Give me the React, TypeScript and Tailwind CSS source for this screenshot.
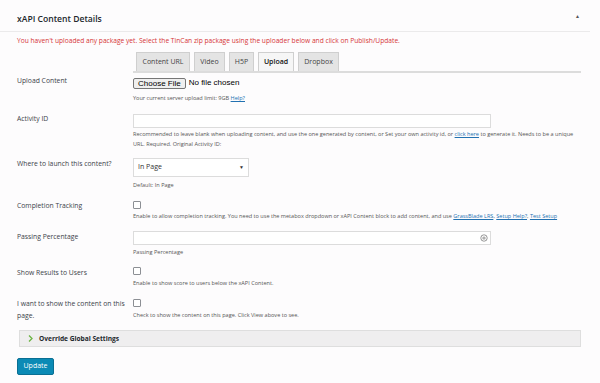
import React from 'react';

const tabs = [
  { name: 'Content URL', w: 'w-[54px]' },
  { name: 'Video', w: 'w-[31px]' },
  { name: 'H5P', w: 'w-[25px]' },
  { name: 'Upload', w: 'w-[36px]' },
  { name: 'Dropbox', w: 'w-[41px]' },
];

const Row: React.FC<{ label: React.ReactNode; className?: string; children: React.ReactNode }> = ({ label, className, children }) => (
  <div className={`flex ${className || ''}`}>
    <div className="w-[116px] shrink-0 pr-2 text-[6.8px] text-[#3c434a]">{label}</div>
    <div className="flex-1">{children}</div>
  </div>
);

const Desc: React.FC<{ children: React.ReactNode; className?: string }> = ({ children, className }) => (
  <p className={`text-[5.55px] leading-[10px] text-[#555] whitespace-nowrap ${className || ''}`}>{children}</p>
);

const Checkbox = () => <div className="w-[8px] h-[8px] border border-[#8c8f94] bg-white rounded-[1px]" />;

const App: React.FC = () => {
  return (
    <div className="w-[600px] h-[383px] bg-[#fdfcfd] font-['Open_Sans',sans-serif] overflow-hidden">
      <div className="w-[590px]">
        {/* header */}
        <div className="h-[32px] flex items-center justify-between pl-[17px] pr-[10px] pt-[6px] border-b border-[#ebeaeb]">
          <h2 className="text-[8.6px] font-semibold text-[#23282d] leading-[10px]">xAPI Content Details</h2>
          <span className="text-[5px] text-[#555] -mt-[4px]">▲</span>
        </div>

        <div className="pl-[17px] pr-[9px]">
          <p className="mt-[4px] text-[6.65px] leading-[10px] text-[#d63638] whitespace-nowrap">
            You haven't uploaded any package yet. Select the TinCan zip package using the uploader below and click on Publish/Update.
          </p>

          {/* tabs */}
          <div className="ml-[116px] mt-[6px] border-b-2 border-[#dcdcdc] flex gap-[4px] pl-[3px]">
            {tabs.map((t) => (
              <div
                key={t.name}
                className={`${t.w} h-[19px] flex items-center justify-center text-[7px] border border-b-0 border-[#cfcfcf] ${
                  t.name === 'Upload' ? 'bg-[#f6f6f6] font-semibold text-[#111]' : 'bg-[#e4e4e4] text-[#444]'
                }`}
              >
                {t.name}
              </div>
            ))}
          </div>

          {/* upload */}
          <Row label={<span className="block -mt-[1px] leading-[10px]">Upload Content</span>} className="mt-[4px]">
            <div className="flex items-center gap-[3px]">
              <button className="h-[11px] px-[4px] text-[8px] leading-[9px] bg-[#efefef] border border-[#767676] rounded-[2px] text-black font-['Liberation_Sans',sans-serif]">
                Choose File
              </button>
              <span className="text-[8px] text-black font-['Liberation_Sans',sans-serif]">No file chosen</span>
            </div>
            <Desc className="mt-[4px]">
              Your current server upload limit: 9GB <a className="text-[#2271b1] underline">Help?</a>
            </Desc>
          </Row>

          {/* activity id */}
          <Row label={<span className="block leading-[10px]">Activity ID</span>} className="mt-[11px]">
            <div className="w-[358px] h-[14px] border border-[#dcdcdc] bg-white" />
            <Desc className="mt-[1px]">
              Recommended to leave blank when uploading content, and use the one generated by content, or Set your own activity id, or{' '}
              <a className="text-[#2271b1] underline">click here</a> to generate it. Needs to be a unique
              <br />
              URL. Required. Original Activity ID:
            </Desc>
          </Row>

          {/* launch */}
          <Row label={<span className="block mt-[1px] leading-[10px]">Where to launch this content?</span>} className="mt-[9px]">
            <div className="w-[116px] h-[19px] border border-[#dcdcdc] bg-white flex items-center justify-between px-[4px]">
              <span className="text-[7px] text-[#333]">In Page</span>
              <span className="text-[5px] text-[#333]">▼</span>
            </div>
            <Desc className="mt-[3px]">Default: In Page</Desc>
          </Row>

          {/* completion */}
          <Row label={<span className="block leading-[10px]">Completion Tracking</span>} className="mt-[11px]">
            <Checkbox />
            <Desc className="mt-[2px]">
              Enable to allow completion tracking. You need to use the metabox dropdown or xAPI Content block to add content, and use{' '}
              <a className="text-[#2271b1] underline">GrassBlade LRS</a>, <a className="text-[#2271b1] underline">Setup Help?</a>,{' '}
              <a className="text-[#2271b1] underline">Test Setup</a>
            </Desc>
          </Row>

          {/* passing */}
          <Row label={<span className="block mt-[1px] leading-[10px]">Passing Percentage</span>} className="mt-[10px]">
            <div className="w-[358px] h-[14px] border border-[#dcdcdc] bg-white flex items-center justify-end pr-[2px]">
              <svg width="8" height="8" viewBox="0 0 10 10">
                <circle cx="5" cy="5" r="4" fill="none" stroke="#777" strokeWidth="1" />
                <circle cx="5" cy="5" r="2" fill="#777" />
                <path d="M5 1v8M1 5h8" stroke="#fff" strokeWidth="0.6" />
              </svg>
            </div>
            <Desc className="mt-[2px]">Passing Percentage</Desc>
          </Row>

          {/* show results */}
          <Row label={<span className="block mt-[1px] leading-[10px]">Show Results to Users</span>} className="mt-[10px]">
            <Checkbox />
            <Desc className="mt-[3px]">Enable to show score to users below the xAPI Content.</Desc>
          </Row>

          {/* show content */}
          <Row label={<span className="block -mt-[1px] leading-[12px]">I want to show the content on this page.</span>} className="mt-[11px]">
            <Checkbox />
            <Desc className="mt-[3px]">Check to show the content on this page. Click View above to see.</Desc>
          </Row>

          {/* override */}
          <div className="mt-[8px] ml-[2px] h-[17px] bg-[#efeeef] border border-[#dedede] flex items-center pl-[8px] gap-[6px]">
            <svg width="5" height="7" viewBox="0 0 5 7">
              <path d="M1 0.5 L4 3.5 L1 6.5" fill="none" stroke="#6bb443" strokeWidth="1.3" />
            </svg>
            <span className="text-[6.6px] font-bold text-[#23282d]">Override Global Settings</span>
          </div>

          {/* update */}
          <button className="mt-[11px] h-[17px] w-[37px] bg-[#0b8ab5] border border-[#0a6f93] rounded-[2px] text-white text-[7px] flex items-center justify-center">
            Update
          </button>
        </div>
      </div>
    </div>
  );
};

export default App;
